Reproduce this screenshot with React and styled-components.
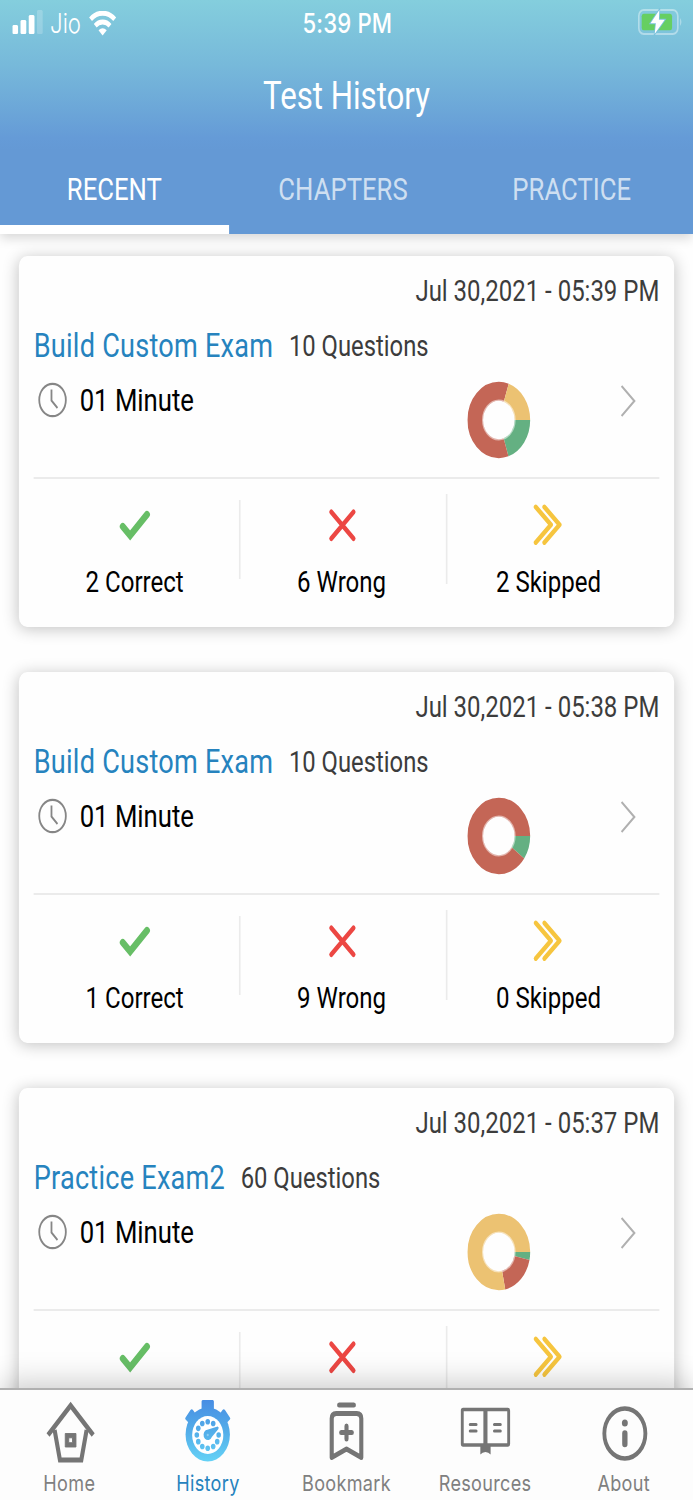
import React from 'react';
import styled, { createGlobalStyle } from 'styled-components';

const colors = {
  correct: '#64b082',
  wrong: '#c46656',
  skipped: '#ecc272',
};

const exams = [
  { date: 'Jul 30,2021 - 05:39 PM', title: 'Build Custom Exam', total: 10, correct: 2, wrong: 6, skipped: 2 },
  { date: 'Jul 30,2021 - 05:38 PM', title: 'Build Custom Exam', total: 10, correct: 1, wrong: 9, skipped: 0 },
  { date: 'Jul 30,2021 - 05:37 PM', title: 'Practice Exam2', total: 60, correct: 2, wrong: 11, skipped: 47, peek: true },
];

// clockwise from 3 o'clock
function Donut({ exam }) {
  const r = 28.7;
  const length = 2 * Math.PI * r;
  let start = 0;
  return (
    <DonutSvg viewBox="0 0 78 78">
      {['correct', 'wrong', 'skipped'].map((key) => {
        const part = (exam[key] / exam.total) * length;
        const offset = -start;
        start += part;
        if (!part) return null;
        return (
          <circle
            key={key}
            cx="38.5"
            cy="39"
            r={r}
            fill="none"
            stroke={colors[key]}
            strokeWidth="19"
            strokeDasharray={`${part} ${length - part}`}
            strokeDashoffset={offset}
          />
        );
      })}
      <circle cx="38.5" cy="39" r="19.7" fill="none" stroke="#fff" strokeOpacity="0.5" strokeWidth="1.6" />
    </DonutSvg>
  );
}

function ExamCard({ exam }) {
  return (
    <Card>
      <DateText>{exam.date}</DateText>
      <TitleRow>
        <ExamTitle>{exam.title}</ExamTitle>
        <QuestionCount>{exam.total} Questions</QuestionCount>
      </TitleRow>
      <DetailRow>
        <ClockIcon viewBox="0 0 36 36">
          <circle cx="18" cy="18" r="16.2" />
          <path d="M16.7 7.5v11l7.3 7.5" />
        </ClockIcon>
        <Duration>01 Minute</Duration>
        <Donut exam={exam} />
        <ChevronIcon viewBox="0 0 20 34">
          <path d="M2 2l15.5 15L2 32" />
        </ChevronIcon>
      </DetailRow>
      <Stats>
        <Stat>
          <StatIcon viewBox="0 0 44 44">
            <path d="M7.5 23.5l9 9L37 11.5" fill="none" stroke="#67be66" strokeWidth="7.2" strokeLinecap="round" />
          </StatIcon>
          {!exam.peek && <StatLabel>{exam.correct} Correct</StatLabel>}
        </Stat>
        <Separator $height={79} />
        <Stat>
          <StatIcon viewBox="0 0 44 44">
            <path d="M9.5 9l27 26.5M36.5 9L9.5 35.5" fill="none" stroke="#ec4743" strokeWidth="5" strokeLinecap="round" />
          </StatIcon>
          {!exam.peek && <StatLabel>{exam.wrong} Wrong</StatLabel>}
        </Stat>
        <Separator $height={90} />
        <Stat>
          <StatIcon viewBox="0 0 44 44">
            <path
              d="M6.5 4l18.5 17.7L6.5 39.5M17 4l18.5 17.7L17 39.5"
              fill="none"
              stroke="#f6c53f"
              strokeWidth="4.9"
              strokeLinecap="round"
              strokeLinejoin="round"
            />
          </StatIcon>
          {!exam.peek && <StatLabel>{exam.skipped} Skipped</StatLabel>}
        </Stat>
      </Stats>
    </Card>
  );
}

function HomeIcon() {
  return (
    <NavSvg viewBox="0 0 66 66">
      <path d="M7.5 37L35 7.5 62.5 37" fill="none" stroke="#757575" strokeWidth="5" />
      <path d="M15.500 32L22 62h26L54.5 32" fill="none" stroke="#757575" strokeWidth="5" />
      <path d="M28.5 35.5h13v13.500h-13z M32.7 39.8v4.9h4.6v-4.900z" fill="#757575" fillRule="evenodd" stroke="#757575" />
    </NavSvg>
  );
}

function HistoryIcon() {
  const dots = Array.from({ length: 12 }, (_, i) => (i * Math.PI) / 6).filter((_, i) => i !== 11);
  return (
    <NavSvg viewBox="0 0 66 66">
      <defs>
        <linearGradient id="watch" x1="0" y1="0" x2="0" y2="66" gradientUnits="userSpaceOnUse">
          <stop offset="0" stopColor="#478be3" />
          <stop offset="0.5" stopColor="#53ade9" />
          <stop offset="1" stopColor="#66d5f7" />
        </linearGradient>
      </defs>
      <g fill="url(#watch)">
        <path d="M27 2h12q1.5 0 1.5 1.5v8H25.500v-8Q25.500 2 27 2zM28 10h10v6H28z" />
        <path d="M6 19.500l6-7.500q1.500-1.500 3 0l3.500 4-9 8.500-3.500-3q-1-1 0-2zM60 19.500l-6-7.500q-1.500-1.500-3 0l-3.500 4 9 8.500 3.500-3q1-1 0-2z" />
        <circle cx="33" cy="36.5" r="27" />
      </g>
      <circle cx="33" cy="37" r="19" fill="#fff" />
      <g fill="url(#watch)">
        {dots.map((angle) => (
          <circle key={angle} cx={33 + 13.3 * Math.cos(angle)} cy={37 + 13.3 * Math.sin(angle)} r="2.8" />
        ))}
        <path d="M30.5 32.2L45 28.5q2 0 1 2.5L38 39a5.300 5.300 0 1 1-7.500-6.800z" />
      </g>
      <circle cx="33" cy="37" r="1.3" fill="#8ccdf2" />
    </NavSvg>
  );
}

function BookmarkIcon() {
  return (
    <NavSvg viewBox="0 0 66 66">
      <g fill="none" stroke="#757575" strokeWidth="5" strokeLinecap="round">
        <path d="M24 7h18" />
        <path d="M15 59.500V20.500q0-5 5.500-5h25q5.500 0 5.500 5v39L33 51z" strokeLinejoin="round" />
        <path d="M33 28v13M26.500 34.500h13" />
      </g>
    </NavSvg>
  );
}

function ResourcesIcon() {
  return (
    <NavSvg viewBox="0 0 66 66">
      <rect x="5" y="11.500" width="56.5" height="35.500" rx="1" fill="none" stroke="#757575" strokeWidth="3.500" />
      <path d="M30.700 11.500h5v36h-5zM27 46h12.500v10.500q-2.500-2.500-6.250-2.500t-6.250 2.500z" fill="#757575" />
      <path d="M14.500 26.500h7.500M14.500 33h7.500M44 26.500h7.500M44 33h7.500" stroke="#757575" strokeWidth="3.200" strokeLinecap="round" />
    </NavSvg>
  );
}

function AboutIcon() {
  return (
    <NavSvg viewBox="0 0 66 66">
      <circle cx="34" cy="35.500" r="25" fill="none" stroke="#757575" strokeWidth="4.700" />
      <circle cx="34" cy="25" r="3.600" fill="#757575" />
      <path d="M34 35.500v10.500" stroke="#757575" strokeWidth="6.500" strokeLinecap="round" />
    </NavSvg>
  );
}

const navItems = [
  { label: 'Home', Icon: HomeIcon },
  { label: 'History', Icon: HistoryIcon, active: true },
  { label: 'Bookmark', Icon: BookmarkIcon },
  { label: 'Resources', Icon: ResourcesIcon },
  { label: 'About', Icon: AboutIcon },
];

function App() {
  return (
    <>
      <GlobalStyle />
      <Viewport>
        <Screen>
          <Header>
            <StatusBar>
              <Carrier>
                <SignalIcon viewBox="0 0 38 26">
                  <rect x="0" y="16" width="7" height="9" rx="1.5" />
                  <rect x="10" y="11" width="7" height="14" rx="1.5" />
                  <rect x="20" y="6" width="7" height="19" rx="1.5" />
                  <rect x="30" y="1" width="7" height="24" rx="1.5" opacity="0.2" />
                </SignalIcon>
                <CarrierName>Jio</CarrierName>
                <WifiIcon viewBox="0 0 34 25">
                  <path d="M2.3 8.2a21 21 0 0 1 29.4 0" />
                  <path d="M8 14.7a13 13 0 0 1 18 0" />
                  <path d="M17 24.5l-5-5.3q5-4 10 0z" className="dot" />
                </WifiIcon>
              </Carrier>
              <Clock>5:39 PM</Clock>
              <BatteryIcon viewBox="0 0 54 28">
                <rect x="1" y="2" width="47.5" height="24" rx="6" fill="none" stroke="#fff" strokeOpacity="0.4" strokeWidth="2" />
                <path d="M51.5 10q2.5 4 0 8z" fill="#fff" fillOpacity="0.5" />
                <rect x="4.5" y="5.8" width="37" height="16.5" rx="2.5" fill="#66cf62" />
                <path
                  d="M26 2L15.3 15.3h6.5L20.3 26 32.5 11.8h-7z"
                  fill="#fff"
                  stroke="#7ac2dc"
                  strokeWidth="2"
                  paintOrder="stroke"
                />
              </BatteryIcon>
            </StatusBar>
            <PageTitle>Test History</PageTitle>
            <Tabs>
              <Tab $active>RECENT</Tab>
              <Tab>CHAPTERS</Tab>
              <Tab>PRACTICE</Tab>
            </Tabs>
          </Header>
          <List>
            {exams.map((exam) => (
              <ExamCard key={exam.date} exam={exam} />
            ))}
          </List>
          <BottomNav>
            {navItems.map(({ label, Icon, active }) => (
              <NavItem key={label} $active={active}>
                <Icon />
                {label}
              </NavItem>
            ))}
          </BottomNav>
        </Screen>
      </Viewport>
    </>
  );
}

const GlobalStyle = createGlobalStyle`
  * {
    box-sizing: border-box;
  }

  body {
    margin: 0;
    background: #fefefe;
  }
`;

const Viewport = styled.div`
  width: 693px;
  height: 1500px;
  overflow: hidden;
`;

/* laid out at 844px and narrowed to the viewport */
const Screen = styled.div`
  width: 844px;
  height: 1500px;
  display: flex;
  flex-direction: column;
  transform: scaleX(0.8211);
  transform-origin: 0 0;
  background: #fefefe;
  font-family: Roboto, sans-serif;
`;

const Header = styled.header`
  position: relative;
  z-index: 1;
  flex: none;
  height: 234px;
  display: flex;
  flex-direction: column;
  background: linear-gradient(#84cedd 0, #77b9da 65px, #659bd7 138px, #6499d5 150px);
  box-shadow: 0 4px 12px rgba(0, 0, 0, 0.16);
`;

const StatusBar = styled.div`
  height: 47px;
  padding: 0 13px 0 15px;
  display: grid;
  grid-template-columns: 1fr auto 1fr;
  align-items: center;
  color: #fff;
  font-family: Inter, sans-serif;
`;

const Carrier = styled.div`
  display: flex;
  align-items: center;
`;

const SignalIcon = styled.svg`
  width: 38px;
  height: 26px;
  margin-top: -3px;
  fill: #fff;
`;

const CarrierName = styled.span`
  width: 38px;
  margin-left: 8px;
  font-size: 27px;
  font-weight: 300;
  line-height: 47px;
`;

const WifiIcon = styled.svg`
  width: 34px;
  height: 25px;
  margin-left: 9px;
  margin-top: -1px;
  fill: none;
  stroke: #fff;
  stroke-width: 5;

  .dot {
    fill: #fff;
    stroke: none;
  }
`;

const Clock = styled.span`
  font-size: 27px;
  font-weight: 500;
  letter-spacing: 0.2px;
  line-height: 47px;
`;

const BatteryIcon = styled.svg`
  width: 54px;
  height: 28px;
  margin-top: -3px;
  justify-self: end;
`;

const PageTitle = styled.h1`
  margin: 0;
  height: 97px;
  line-height: 98px;
  text-align: center;
  color: #fff;
  font-size: 38px;
  font-weight: 400;
`;

const Tabs = styled.nav`
  display: flex;
  height: 90px;
`;

const Tab = styled.div`
  width: 278.5px;
  padding-top: 28px;
  line-height: 36px;
  text-align: center;
  font-size: 31.3px;
  color: ${({ $active }) => ($active ? '#fff' : 'rgba(255, 255, 255, 0.7)')};
  border-bottom: 9px solid ${({ $active }) => ($active ? '#fff' : 'transparent')};
`;

const List = styled.main`
  flex: 1;
  min-height: 0;
  padding: 22px 23px 0;
  display: flex;
  flex-direction: column;
  gap: 45px;
  overflow: hidden;
`;

const Card = styled.article`
  flex: none;
  height: 371px;
  padding: 15px 18px 0;
  border-radius: 10px;
  background: #fefefe;
  box-shadow: 0 2px 18px rgba(0, 0, 0, 0.24);
`;

const DateText = styled.div`
  height: 40px;
  line-height: 40px;
  text-align: right;
  font-size: 29.2px;
  color: #3c3c3c;
`;

const TitleRow = styled.div`
  margin-top: 14px;
  height: 42px;
  display: flex;
  align-items: center;
  line-height: 42px;
`;

const ExamTitle = styled.span`
  font-size: 33px;
  letter-spacing: 0.3px;
  color: #2683be;
`;

const QuestionCount = styled.span`
  margin-left: 19px;
  font-size: 29px;
  color: #3c3c3c;
`;

const DetailRow = styled.div`
  height: 112px;
  padding: 0 28px 0 5px;
  display: flex;
  align-items: flex-start;
  border-bottom: 2px solid #ebebeb;
`;

const ClockIcon = styled.svg`
  width: 36px;
  height: 36px;
  margin-top: 15px;
  fill: none;
  stroke: #868686;
  stroke-width: 2.2;
`;

const Duration = styled.span`
  margin: 14px auto 0 15px;
  line-height: 40px;
  font-size: 31.3px;
  color: #000;
`;

const DonutSvg = styled.svg`
  width: 78px;
  height: 78px;
  margin-top: 14px;
`;

const ChevronIcon = styled.svg`
  width: 20px;
  height: 34px;
  margin-top: 17px;
  margin-left: 108px;
  fill: none;
  stroke: #b0b0b0;
  stroke-width: 2.4;
`;

const Stats = styled.div`
  height: 120px;
  margin-left: -3px;
  display: flex;
  align-items: center;
`;

const Stat = styled.div`
  width: 252px;
  flex: none;
  height: 120px;
  padding-top: 24px;
  display: flex;
  flex-direction: column;
  align-items: center;
`;

const StatIcon = styled.svg`
  flex: none;
  width: 44px;
  height: 44px;
`;

const StatLabel = styled.span`
  flex: none;
  margin-top: 15px;
  line-height: 40px;
  font-size: 29.3px;
  color: #000;
`;

const Separator = styled.div`
  flex: none;
  width: 2px;
  margin: 0 -3px 0 1px;
  height: ${({ $height }) => $height}px;
  background: #ebebeb;
`;

const BottomNav = styled.footer`
  position: relative;
  z-index: 1;
  flex: none;
  height: 112px;
  display: flex;
  border-top: 2px solid #b0b0b0;
  background: #fdfdfd;
  box-shadow: 0 -4px 32px rgba(0, 0, 0, 0.22);
`;

const NavItem = styled.div`
  flex: 1;
  padding-top: 8px;
  display: flex;
  flex-direction: column;
  align-items: center;
  gap: 4px;
  line-height: 30px;
  font-family: Inter, sans-serif;
  font-size: 22px;
  letter-spacing: 0.4px;
  color: ${({ $active }) => ($active ? '#2683be' : '#808080')};
`;

const NavSvg = styled.svg`
  width: 66px;
  height: 66px;
`;

export default App;
